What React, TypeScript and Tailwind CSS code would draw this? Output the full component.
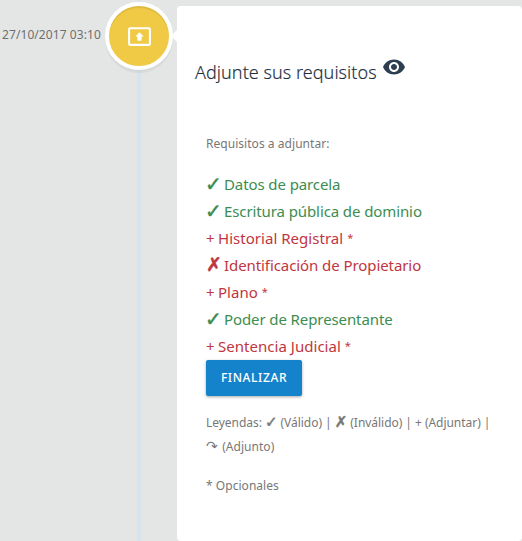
import React from "react";
import { MdOutlinePresentToAll, MdRemoveRedEye } from "react-icons/md";

type Estado = "valido" | "invalido" | "adjuntar";

interface Requisito {
  nombre: string;
  estado: Estado;
  opcional?: boolean;
}

const requisitos: Requisito[] = [
  { nombre: "Datos de parcela", estado: "valido" },
  { nombre: "Escritura pública de dominio", estado: "valido" },
  { nombre: "Historial Registral", estado: "adjuntar", opcional: true },
  { nombre: "Identificación de Propietario", estado: "invalido" },
  { nombre: "Plano", estado: "adjuntar", opcional: true },
  { nombre: "Poder de Representante", estado: "valido" },
  { nombre: "Sentencia Judicial", estado: "adjuntar", opcional: true },
];

const simbolos = {
  valido: "✓",
  invalido: "✗",
  adjuntar: "+",
};

const estilosSimbolo = {
  valido: "-ml-px w-[19px] font-['DejaVu_Sans',sans-serif] text-[20px] leading-none [-webkit-text-stroke:0.5px_currentColor]",
  invalido: "-ml-px w-[19px] pl-px font-['DejaVu_Sans',sans-serif] text-[19px] leading-none [-webkit-text-stroke:0.5px_currentColor]",
  adjuntar: "w-[12px]",
};

const estilosNombre = {
  valido: "tracking-[-0.1px]",
  invalido: "tracking-[-0.08px]",
  adjuntar: "tracking-[0.03px]",
};

const RequisitoItem = ({ nombre, estado, opcional }: Requisito) => {
  return (
    <li className={`flex h-[27px] items-center whitespace-nowrap ${estado === "valido" ? "text-[#3c8d4f]" : "text-[#bf3640]"}`}>
      <span className={estilosSimbolo[estado]}>{simbolos[estado]}</span>
      <span className={estilosNombre[estado]}>
        {nombre}
        {opcional && <span className="inline-block pl-[4px] align-top text-[11px] leading-[23px]">*</span>}
      </span>
    </li>
  );
};

const App = () => {
  return (
    <main className="flex h-[541px] w-[522px] overflow-hidden bg-[#e4e6e5] font-['Noto_Sans',sans-serif] text-[#777]">
      {/* Fecha */}
      <div className="w-[105px] shrink-0 pl-[2px] pt-[24px]">
        <p className="whitespace-nowrap text-[12px] leading-[21px] tracking-[0.08px] text-[#6f6f6f]">27/10/2017 03:10</p>
      </div>

      {/* Línea de tiempo */}
      <div className="relative flex w-[68px] shrink-0 justify-center">
        <div className="h-full w-[4px] bg-[#d7e4ed]" />
        <div className="absolute left-0 top-[2px] flex size-[68px] items-center justify-center rounded-full border-4 border-white bg-[#f0ca45] text-white shadow-[0_3px_0_rgba(0,0,0,0.05),inset_0_2px_0_rgba(0,0,0,0.08)]">
          <MdOutlinePresentToAll size={25} />
        </div>
      </div>

      <div className="-ml-[2px] mt-[30px] h-0 shrink-0 border-y-[6px] border-r-[6px] border-y-transparent border-r-white" />

      {/* Tarjeta de requisitos */}
      <section className="mt-[6px] h-[535px] w-[345px] shrink-0 rounded-[4px] bg-white">
        <h2 className="flex h-[99px] pl-[18px] pt-[51px] text-[#2c3e50]">
          <span className="w-[183px] whitespace-nowrap text-[18px] leading-[31px] font-light tracking-[0.05px] text-[#1f2f40] [-webkit-text-stroke:0.15px_currentColor]">
            Adjunte sus requisitos
          </span>
          <MdRemoveRedEye className="ml-[4px] mt-[-2px] shrink-0" size={24} />
        </h2>

        <div className="pl-[29px] pt-[27px] text-[12px] leading-[24px] tracking-[0.04px]">
          <p className="h-[38px] whitespace-nowrap">Requisitos a adjuntar:</p>
          <ul className="h-[190px] text-[15px]">
            {requisitos.map((r) => (
              <RequisitoItem key={r.nombre} {...r} />
            ))}
          </ul>
          <button className="block h-[36px] w-[96px] rounded-[2px] bg-[#1583cb] text-[12px] font-medium tracking-[0.6px] text-white shadow-[0_1px_3px_rgba(0,0,0,0.35)]">
            FINALIZAR
          </button>

          {/* Leyendas */}
          <div className="mt-[15px] whitespace-nowrap">
            <p className="h-[24px] tracking-[-0.04px]">
              Leyendas:{" "}
              <span className="font-['DejaVu_Sans',sans-serif] text-[15px] leading-none [-webkit-text-stroke:0.5px_currentColor]">✓</span> (Válido) |{" "}
              <span className="font-['DejaVu_Sans',sans-serif] text-[15px] leading-none [-webkit-text-stroke:0.5px_currentColor]">✗</span> (Inválido) | + (Adjuntar) |
            </p>
            <p className="h-[24px]">
              <span className="inline-block w-[13px] font-['DejaVu_Sans',sans-serif] text-[14px] leading-none">↷</span> (Adjunto)
            </p>
          </div>
          <p className="mt-[15px]">* Opcionales</p>
        </div>
      </section>
    </main>
  );
};

export default App;
